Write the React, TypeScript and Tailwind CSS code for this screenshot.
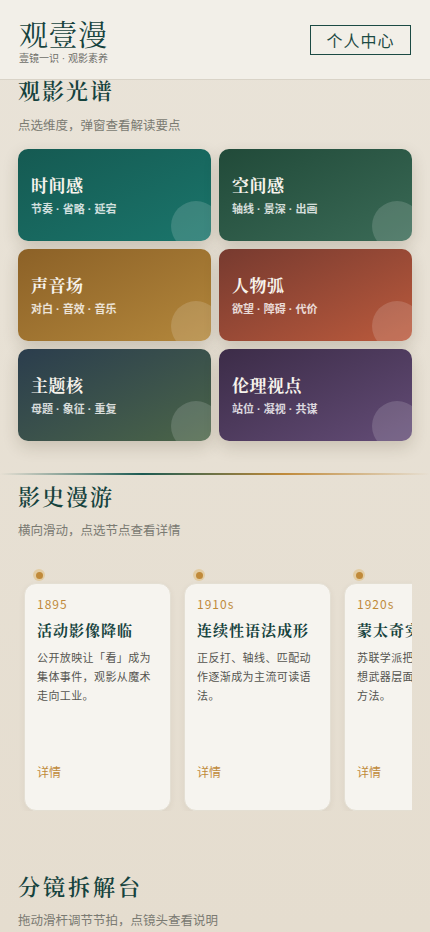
import React from 'react';

const serif = { fontFamily: '"Noto Serif CJK SC", "Noto Sans CJK SC", serif' };
const mixed = { fontFamily: '"Liberation Sans", "Noto Sans CJK SC", sans-serif' };

const dims = [
  { title: '时间感', sub: '节奏 · 省略 · 延宕', bg: 'bg-gradient-to-br from-[#155a52] to-[#1a756b]' },
  { title: '空间感', sub: '轴线 · 景深 · 出画', bg: 'bg-gradient-to-br from-[#214a39] to-[#3a6a56]' },
  { title: '声音场', sub: '对白 · 音效 · 音乐', bg: 'bg-gradient-to-br from-[#8c6127] to-[#b3873b]' },
  { title: '人物弧', sub: '欲望 · 障碍 · 代价', bg: 'bg-gradient-to-br from-[#773a2f] to-[#bb5a3c]' },
  { title: '主题核', sub: '母题 · 象征 · 重复', bg: 'bg-gradient-to-br from-[#2b3d4d] to-[#4b6547]' },
  { title: '伦理视点', sub: '站位 · 凝视 · 共谋', bg: 'bg-gradient-to-br from-[#3c2c48] to-[#634c76]' },
];

const history = [
  { year: '1895', title: '活动影像降临', desc: '公开放映让「看」成为集体事件，观影从魔术走向工业。' },
  { year: '1910s', title: '连续性语法成形', desc: '正反打、轴线、匹配动作逐渐成为主流可读语法。' },
  { year: '1920s', title: '蒙太奇实验', desc: '苏联学派把剪辑推向思想武器层面，形成系统方法。' },
];

export default function App() {
  return (
    <div className="min-h-[932px] bg-gradient-to-b from-[#e9e3d8] to-[#e5ddcf] text-[#1c4a44]" style={{ fontFamily: '"Noto Sans CJK SC", sans-serif' }}>
      <header className="h-[80px] bg-[#f2efe8] border-b border-[#d9d3c7] flex items-center justify-between px-[19px]">
        <div className="pt-[4px]">
          <h1 className="text-[29px] leading-[32px] text-[#16433e] tracking-[0.5px]" style={serif}>观壹漫</h1>
          <p className="text-[10px] leading-[12px] text-[#6e6e68] mt-[3px]" style={mixed}>壹镜一识 · 观影素养</p>
        </div>
        <button className="w-[101px] h-[30px] border border-[#1c4a44] text-[16px] text-[#1c4a44] tracking-[1px] flex items-center justify-center">
          个人中心
        </button>
      </header>

      <section className="px-[18px]">
        <h2 className="text-[22px] leading-[26px] tracking-[2px] text-[#16433e] font-semibold -mt-[3px]" style={serif}>观影光谱</h2>
        <p className="text-[12.5px] text-[#7a7a72] mt-[13px] leading-[18px]">点选维度，弹窗查看解读要点</p>
        <div className="grid grid-cols-2 gap-[8px] mt-[15px]">
          {dims.map(d => (
            <div key={d.title} className={`relative h-[92px] rounded-[10px] overflow-hidden shadow-[0_6px_16px_rgba(60,50,30,0.18)] px-[13px] pt-[25px] text-white ${d.bg}`}>
              <div className="text-[17px] leading-[22px] font-bold tracking-[0.5px] text-[#f7f3ec]" style={serif}>{d.title}</div>
              <div className="text-[11px] leading-[14px] font-bold text-white/80 mt-[6px]" style={mixed}>{d.sub}</div>
              <div className="absolute w-[50px] h-[50px] rounded-full bg-white/15 -right-[10px] -bottom-[10px]" />
            </div>
          ))}
        </div>
      </section>

      <div className="h-[2px] mt-[32px] bg-[linear-gradient(90deg,transparent,#1b5a52_33%,#c08a3a_66%,transparent)]" />

      <section className="px-[18px] mt-[8px]">
        <h2 className="text-[22px] leading-[26px] tracking-[2px] text-[#16433e] font-semibold" style={serif}>影史漫游</h2>
        <p className="text-[12.5px] text-[#7a7a72] mt-[12px] leading-[18px]">横向滑动，点选节点查看详情</p>
        <div className="overflow-hidden mt-[30px]">
          <div className="flex gap-[13px] pl-[6px] w-max">
            {history.map(h => (
              <div key={h.year} className="w-[147px] flex flex-col">
                <div className="h-[12px] w-[12px] ml-[9px] rounded-full bg-[#e3cda4] flex items-center justify-center">
                  <div className="h-[7px] w-[7px] rounded-full bg-[#c08a3a]" />
                </div>
                <div className="mt-[2px] h-[228px] rounded-[12px] bg-[#f6f4ef] border border-[#e4dfd3] shadow-[0_2px_6px_rgba(60,50,30,0.06)] px-[12px] pt-[12px] pb-[30px] flex flex-col">
                  <div className="text-[12px] leading-[16px] tracking-[1px] text-[#c08a3a]">{h.year}</div>
                  <div className="text-[15px] leading-[20px] font-bold tracking-[1px] text-[#16433e] mt-[8px] whitespace-nowrap" style={serif}>{h.title}</div>
                  <p className="text-[11px] leading-[19px] tracking-[0.4px] text-[#555550] mt-[8px]">{h.desc}</p>
                  <div className="mt-auto text-[12px] text-[#c08a3a] leading-[16px]">详情</div>
                </div>
              </div>
            ))}
          </div>
        </div>
      </section>

      <section className="px-[18px] mt-[62px]">
        <h2 className="text-[22px] leading-[26px] tracking-[3px] text-[#16433e] font-semibold" style={serif}>分镜拆解台</h2>
        <p className="text-[12.5px] text-[#7a7a72] mt-[12px] leading-[18px]">拖动滑杆调节节拍，点镜头查看说明</p>
      </section>
    </div>
  );
}
